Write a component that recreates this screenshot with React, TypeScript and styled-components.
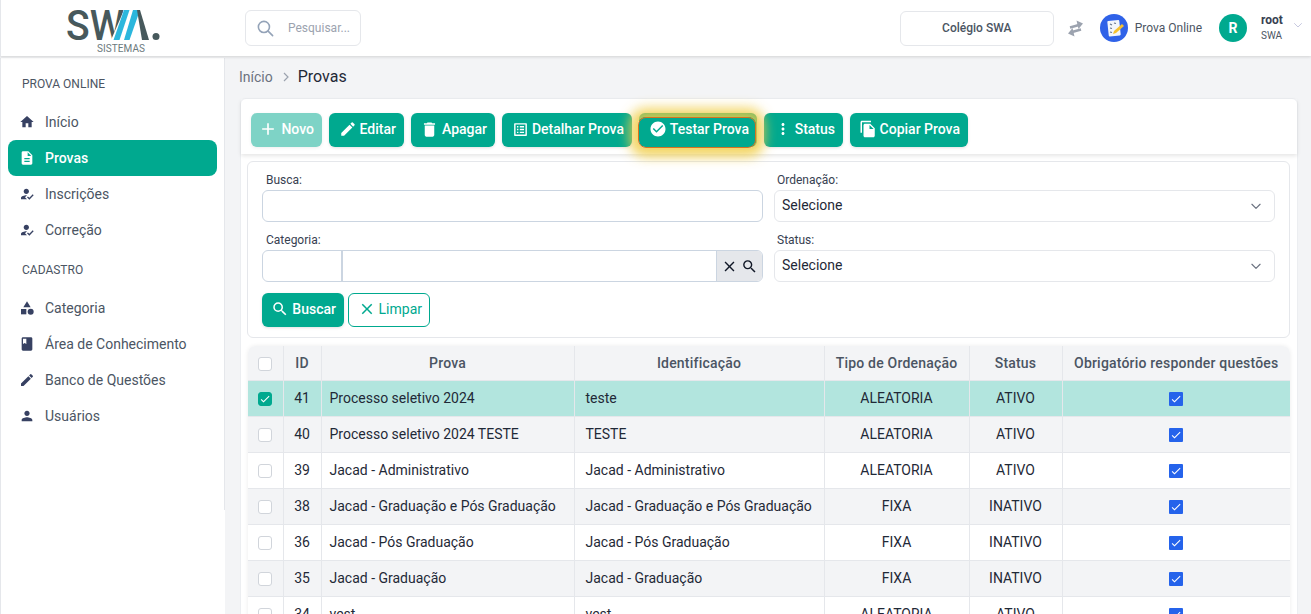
import React from "react";
import styled, { createGlobalStyle } from "styled-components";
import {
  MdHome, MdDescription, MdHowToReg, MdCategory, MdBook, MdEdit, MdPerson, MdAdd, MdDelete,
  MdOutlineListAlt, MdCheckCircle, MdMoreVert, MdFileCopy, MdSearch, MdClose, MdCheck,
} from "react-icons/md";
import { HiOutlineChevronDown, HiOutlineSearch } from "react-icons/hi";

const primary = "#00a98f";

const Global = createGlobalStyle`
  html, body { margin: 0; padding: 0; height: 100%; overflow: hidden; }
  body { font-family: Roboto, "Liberation Sans", sans-serif; background: #f3f4f6; color: #374151; }
  * { box-sizing: border-box; }
`;

const Page = styled.div`
  height: 100vh; overflow: hidden; display: flex; flex-direction: column;
`;
const Header = styled.header`
  flex: none; height: 56px; background: #fff; display: flex; align-items: center;
  box-shadow: 0 1px 3px rgba(0,0,0,.14); border-left: 1px solid #e5e7eb; position: relative; z-index: 2;
`;
const LogoBox = styled.div`
  width: 244px; flex: none; display: flex; padding-left: 64px; align-items: center;
  svg { overflow: visible; }
`;
const SearchBox = styled.div`
  width: 116px; height: 36px; border: 1px solid #e5e7eb; border-radius: 6px; display: flex; align-items: center;
  padding-left: 10px; gap: 13px; font-size: 12px; color: #9ca3af; svg { color: #94a3b8; flex: none; }
`;
const HeaderRight = styled.div`
  margin-left: auto; display: flex; align-items: center; height: 100%; padding-right: 7px;
`;
const SchoolBox = styled.div`
  width: 154px; height: 35px; border: 1px solid #e5e7eb; border-radius: 6px; display: flex; align-items: center;
  justify-content: center; font-size: 12px; font-weight: 500; color: #4b5563;
`;
const SwapIcon = styled.span`
  display: flex; margin: 0 15px 0 12px; color: #9ca3af;
`;
const ModuleName = styled.span`
  font-size: 12px; color: #4b5563; margin: 0 17px 0 7px;
`;
const Avatar = styled.div`
  width: 28px; height: 28px; border-radius: 50%; background: ${primary}; color: #fff; font-size: 14px; font-weight: 700;
  display: flex; align-items: center; justify-content: center; margin-right: 14px;
`;
const UserInfo = styled.div`
  display: flex; flex-direction: column; width: 31px;
`;
const UserName = styled.span`
  font-size: 12px; font-weight: 700; color: #374151; line-height: 15px;
`;
const UserOrg = styled.span`
  font-size: 10px; color: #4b5563; line-height: 15px;
`;
const ChevronUser = styled.span`
  display: flex; color: #c7c9e0; margin-bottom: 6px;
`;
const Body = styled.div`
  flex: 1; display: flex; min-height: 0; padding-top: 2px;
`;
const Sidebar = styled.aside`
  position: relative; flex: none; width: 225px; background: #fff; border-left: 1px solid #e5e7eb;
  padding: 18px 7px 0;
  &::after { content: ""; position: absolute; top: 0; right: 0; width: 1px; height: 452px; background: #e5e7eb; }
`;
const SectionLabel = styled.div<{ $top?: number }>`
  font-size: 12px; line-height: 16px; color: #4b5563; padding-left: 14px; margin-top: ${p => p.$top ?? 0}px; margin-bottom: 12px;
`;
const NavItem = styled.div<{ $active?: boolean }>`
  height: 36px; width: 209px; display: flex; align-items: center; gap: 10px; padding-left: 11px;
  border-radius: 8px; font-size: 14px;
  background: ${p => (p.$active ? primary : "transparent")};
  color: ${p => (p.$active ? "#fff" : "#4b5563")};
  font-weight: ${p => (p.$active ? 500 : 400)};
  svg { color: ${p => (p.$active ? "#fff" : "#374162")}; flex: none; }
`;
const Content = styled.main`
  flex: 1; min-width: 0; padding: 0 13px 0 15px;
`;
const Breadcrumb = styled.nav`
  height: 40px; display: flex; align-items: center; font-size: 14px; color: #6b7280; gap: 7px; padding-bottom: 3px; margin-left: -1px;
  svg { color: #9ca3af; }
`;
const Crumb = styled.span`
  font-size: 16px; color: #1f2937; margin-left: -1px;
`;
const Card = styled.section`
  background: #fff; border: 1px solid #eceef1; border-radius: 6px 6px 0 0; width: 1058px; height: 520px;
`;
const Toolbar = styled.div`
  height: 55px; display: flex; gap: 7px; padding: 14px 10px 0; box-shadow: 0 2px 4px rgba(0,0,0,.1);
`;
const Button = styled.button<{ $dim?: boolean; $glow?: boolean; $w: number }>`
  position: relative; height: 34px; width: ${p => p.$w}px; padding: 0 8px 2px 0; display: flex; align-items: center; justify-content: flex-end; gap: 3px;
  font: 500 14px Roboto, sans-serif; color: #fff; background: ${primary}; border: 0; border-radius: 6px;
  box-shadow: 0 1px 3px rgba(0,0,0,.12); opacity: ${p => (p.$dim ? 0.5 : 1)};
  ${p => p.$glow && `
    &::after {
      content: ""; position: absolute; left: -1px; right: 1px; top: 4px; bottom: -1px; border: 1px solid #d9731f;
      border-radius: 8px; box-shadow: 0 0 12px 9px rgba(240,205,70,.82); pointer-events: none;
    }
    z-index: 1;
  `}
`;
const Filters = styled.form`
  margin: 7px 7px 0 6px; height: 177px; border: 1px solid #e5e7eb; border-radius: 6px; padding: 10px 14px;
`;
const FilterGrid = styled.div`
  display: grid; grid-template-columns: 501px 501px; column-gap: 11px; row-gap: 10px;
`;
const Field = styled.div``;
const Label = styled.div<{ $inset?: number }>`
  font-size: 12px; line-height: 16px; margin-bottom: 2px; padding-left: ${p => p.$inset ?? 4}px; color: #374151;
`;
const TextBox = styled.div`
  height: 32px; border: 1px solid #cbd5e1; border-radius: 6px; background: #fff;
`;
const Select = styled.div`
  height: 32px; border: 1px solid #e5e7eb; border-radius: 6px; background: #fff; display: flex; align-items: center; justify-content: space-between;
  padding: 0 11px 2px 7px; font-size: 14px; color: #1f2937; svg { color: #6b7280; margin-top: 2px; }
`;
const LookupGroup = styled.div`
  height: 32px; display: flex; border: 1px solid #cbd5e1; border-radius: 6px; overflow: hidden;
`;
const LookupCode = styled.div`
  width: 80px; border-right: 2px solid #cbd5e1;
`;
const LookupName = styled.div`
  flex: 1;
`;
const LookupActions = styled.div`
  width: 46px; background: #e5e7eb; border-left: 1px solid #cbd5e1; display: flex; align-items: center; justify-content: center; gap: 3px; color: #111827;
`;
const FilterActions = styled.div`
  display: flex; gap: 4px; margin-top: 11px;
`;
const OutlineButton = styled.button`
  height: 34px; width: 82px; padding: 0 7px 2px 0; background: #fff; border: 1px solid ${primary}; border-radius: 6px; color: ${primary};
  font: 400 14px Roboto, sans-serif; display: flex; align-items: center; justify-content: flex-end; gap: 3px;
`;
const TableWrap = styled.div`
  margin: 8px 7px 0 7px; border-radius: 7px 7px 0 0; overflow: hidden; box-shadow: 0 0 4px rgba(0,0,0,.08); width: 1042px;
`;
const Table = styled.table`
  width: 1042px; table-layout: fixed; border-collapse: collapse; font-size: 14px; color: #1f2937;
`;
const Th = styled.th<{ $w: number }>`
  width: ${p => p.$w}px; height: 34px; padding: 0; background: #f3f4f6; font-weight: 500; font-size: 14px; color: #4b5563;
  border-right: 1px solid #e5e7eb; border-bottom: 1px solid #e5e7eb; letter-spacing: .2px; text-align: center; white-space: nowrap;
  &:last-child { border-right: 0; }
`;
const Row = styled.tr<{ $sel?: boolean; $alt?: boolean }>`
  background: ${p => (p.$sel ? "#b2e5de" : p.$alt ? "#f3f4f6" : "#fff")};
`;
const Td = styled.td<{ $pad?: number }>`
  height: 36px; padding: ${p => (p.$pad ? `0 0 0 ${p.$pad}px` : "0")}; text-align: ${p => (p.$pad ? "left" : "center")};
  border-right: 1px solid #e5e7eb; border-bottom: 1px solid #e5e7eb; white-space: nowrap; overflow: hidden;
  &:last-child { border-right: 0; }
`;
const RowCheck = styled.span<{ $on?: boolean }>`
  width: 14px; height: 14px; display: inline-flex; align-items: center; justify-content: center; vertical-align: middle; border-radius: 3px; color: #fff;
  background: ${p => (p.$on ? primary : "#fff")}; border: 1px solid ${p => (p.$on ? primary : "#d1d5db")};
`;
const BlueCheck = styled.span`
  width: 14px; height: 14px; display: inline-flex; align-items: center; justify-content: center; vertical-align: middle; background: #2563eb; color: #fff; border-radius: 1px;
`;

const Logo = () => (
  <svg width="96" height="54" viewBox="0 0 96 54" role="img" aria-label="SWA Sistemas">
    <text x="1" y="39" fontFamily="Roboto, sans-serif" fontWeight="500" fontSize="42" fill="#47595c" textLength="58" lengthAdjust="spacingAndGlyphs">SW</text>
    <polygon points="46,39 53,39 66,9 59,9" fill="#fff" />
    <polygon points="48.5,39 54.5,39 64.5,9 59,9" fill="#2bb7dd" />
    <polygon points="59,39 64.5,39 75,9 68,9" fill="#2bb7dd" />
    <polygon points="72,9 75,9 84,39 77,39" fill="#47595c" />
    <circle cx="91" cy="35.5" r="3.5" fill="#47595c" />
    <text x="32" y="50.5" fontFamily="Roboto, sans-serif" fontSize="10" fill="#6b7a7d" textLength="48">SISTEMAS</text>
  </svg>
);

const ExamIcon = () => (
  <svg width="28" height="28" viewBox="0 0 28 28" style={{ flex: "none" }}>
    <circle cx="14" cy="14" r="14" fill="#2f62e8" />
    <rect x="8" y="6.5" width="12" height="15.5" rx="1" fill="#f3f6fb" transform="rotate(-6 14 14)" />
    <path d="M10 10l2 1 M14 9l2 .5 M10 14l2 .5 M10 18l2 .5" stroke="#64748b" strokeWidth="1.2" />
    <path d="M13 20l1-3 8-7 2 2-8 7z" fill="#f6c12f" />
  </svg>
);

const SwapArrows = () => (
  <svg width="19" height="19" viewBox="0 0 19 19" fill="none" stroke="currentColor">
    <path d="M4 8.5l9-2.5" strokeWidth="2.4" />
    <path d="M10.5 1.5l6.5 3-4.5 5.5z" fill="currentColor" stroke="none" />
    <path d="M15 10.5l-9 2.5" strokeWidth="2.4" />
    <path d="M8.500 17.500l-6.500-3 4.500-5.500z" fill="currentColor" stroke="none" />
  </svg>
);

const rows = [
  ["41", "Processo seletivo 2024", "teste", "ALEATORIA", "ATIVO"],
  ["40", "Processo seletivo 2024 TESTE", "TESTE", "ALEATORIA", "ATIVO"],
  ["39", "Jacad - Administrativo", "Jacad - Administrativo", "ALEATORIA", "ATIVO"],
  ["38", "Jacad - Graduação e Pós Graduação", "Jacad - Graduação e Pós Graduação", "FIXA", "INATIVO"],
  ["36", "Jacad - Pós Graduação", "Jacad - Pós Graduação", "FIXA", "INATIVO"],
  ["35", "Jacad - Graduação", "Jacad - Graduação", "FIXA", "INATIVO"],
  ["34", "vest", "vest", "ALEATORIA", "ATIVO"],
];

export default function App() {
  return (
    <Page>
      <Global />
      <Header>
        <LogoBox><Logo /></LogoBox>
        <SearchBox><HiOutlineSearch size={19} />Pesquisar...</SearchBox>
        <HeaderRight>
          <SchoolBox>Colégio SWA</SchoolBox>
          <SwapIcon><SwapArrows /></SwapIcon>
          <ExamIcon />
          <ModuleName>Prova Online</ModuleName>
          <Avatar>R</Avatar>
          <UserInfo><UserName>root</UserName><UserOrg>SWA</UserOrg></UserInfo>
          <ChevronUser><HiOutlineChevronDown size={12} /></ChevronUser>
        </HeaderRight>
      </Header>
      <Body>
        <Sidebar>
          <SectionLabel>PROVA ONLINE</SectionLabel>
          <NavItem><MdHome size={16} />Início</NavItem>
          <NavItem $active><MdDescription size={16} />Provas</NavItem>
          <NavItem><MdHowToReg size={16} />Inscrições</NavItem>
          <NavItem><MdHowToReg size={16} />Correção</NavItem>
          <SectionLabel $top={14}>CADASTRO</SectionLabel>
          <NavItem><MdCategory size={16} />Categoria</NavItem>
          <NavItem><MdBook size={16} />Área de Conhecimento</NavItem>
          <NavItem><MdEdit size={16} />Banco de Questões</NavItem>
          <NavItem><MdPerson size={16} />Usuários</NavItem>
        </Sidebar>
        <Content>
          <Breadcrumb>Início<svg width="12" height="12" viewBox="0 0 12 12"><path d="M4 2l4 4-4 4" fill="none" stroke="currentColor" strokeWidth="1.2" /></svg><Crumb>Provas</Crumb></Breadcrumb>
          <Card>
            <Toolbar>
              <Button $dim $w={71}><MdAdd size={20} />Novo</Button>
              <Button $w={75}><MdEdit size={18} />Editar</Button>
              <Button $w={84}><MdDelete size={19} />Apagar</Button>
              <Button $w={130}><MdOutlineListAlt size={17} />Detalhar Prova</Button>
              <Button $glow $w={118}><MdCheckCircle size={18} />Testar Prova</Button>
              <Button $w={79}><MdMoreVert size={18} />Status</Button>
              <Button $w={118}><MdFileCopy size={18} />Copiar Prova</Button>
            </Toolbar>
            <Filters>
              <FilterGrid>
                <Field><Label>Busca:</Label><TextBox /></Field>
                <Field><Label $inset={3}>Ordenação:</Label><Select>Selecione<HiOutlineChevronDown size={14} /></Select></Field>
                <Field>
                  <Label>Categoria:</Label>
                  <LookupGroup>
                    <LookupCode /><LookupName />
                    <LookupActions><MdClose size={17} /><MdSearch size={17} /></LookupActions>
                  </LookupGroup>
                </Field>
                <Field><Label $inset={3}>Status:</Label><Select>Selecione<HiOutlineChevronDown size={14} /></Select></Field>
              </FilterGrid>
              <FilterActions>
                <Button $w={82}><MdSearch size={18} />Buscar</Button>
                <OutlineButton><MdClose size={18} />Limpar</OutlineButton>
              </FilterActions>
            </Filters>
            <TableWrap>
              <Table>
                <thead>
                  <tr>
                    <Th $w={35}><RowCheck /></Th>
                    <Th $w={38}>ID</Th>
                    <Th $w={253}>Prova</Th>
                    <Th $w={250}>Identificação</Th>
                    <Th $w={145}>Tipo de Ordenação</Th>
                    <Th $w={93}>Status</Th>
                    <Th $w={228}>Obrigatório responder questões</Th>
                  </tr>
                </thead>
                <tbody>
                  {rows.map((r, i) => (
                    <Row key={r[0]} $sel={i === 0} $alt={i % 2 === 1 && r[0] !== "36" || r[0] === "38"}>
                      <Td><RowCheck $on={i === 0}>{i === 0 && <MdCheck size={12} />}</RowCheck></Td>
                      <Td>{r[0]}</Td>
                      <Td $pad={8}>{r[1]}</Td>
                      <Td $pad={11}>{r[2]}</Td>
                      <Td>{r[3]}</Td>
                      <Td>{r[4]}</Td>
                      <Td><BlueCheck><MdCheck size={12} /></BlueCheck></Td>
                    </Row>
                  ))}
                </tbody>
              </Table>
            </TableWrap>
          </Card>
        </Content>
      </Body>
    </Page>
  );
}
